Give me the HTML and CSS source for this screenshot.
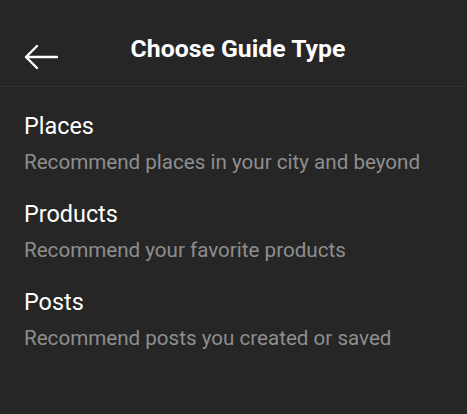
FILE: index.html
```html
<!DOCTYPE html>
<html lang="en">
<head>
    <meta charset="UTF-8">
    <meta name="viewport" content="width=device-width, initial-scale=1.0">
    <title>Choose Guide Type</title>
    <link rel="stylesheet" href="styles.css">
</head>
<body>
    <header class="top-bar">
        <div class="back-btn">
            <svg width="34" height="26" viewBox="0 0 34 26">
                <path d="M33 13 H2 M13 2 L2 13 L13 24" fill="none" stroke="#fff" stroke-width="2.4" stroke-linecap="round" stroke-linejoin="round"/>
            </svg>
        </div>
        <h1>Choose Guide Type</h1>
    </header>

    <div class="content">
        <div class="guide-type">
            <div class="guide-name">Places</div>
            <div class="guide-desc">Recommend places in your city and beyond</div>
        </div>
        <div class="guide-type">
            <div class="guide-name">Products</div>
            <div class="guide-desc">Recommend your favorite products</div>
        </div>
        <div class="guide-type">
            <div class="guide-name">Posts</div>
            <div class="guide-desc">Recommend posts you created or saved</div>
        </div>
    </div>
</body>
</html>
```

FILE: styles.css
```css
body {
    font-family: 'Roboto', sans-serif;
    margin: 0;
    background-color: #262626;
    color: #fff;
}

.top-bar {
    height: 86px;
    border-bottom: 1px solid #333;
    display: flex;
    align-items: center;
    justify-content: center;
    position: relative;
}

.back-btn {
    position: absolute;
    top: 44px;
    left: 24px;
    line-height: 0;
}

.top-bar h1 {
    margin: 0;
    padding: 10px 0 0 9px;
    font-size: 24.8px;
    font-weight: 700;
}

.content {
    padding: 17px 24px 0;
}

.guide-type {
    height: 88px;
}

.guide-name {
    font-size: 23.4px;
    line-height: 36px;
    padding-top: 4px;
}

.guide-desc {
    font-size: 20.6px;
    line-height: 30px;
    margin-top: 3px;
    color: #8e8e8e;
}
```
